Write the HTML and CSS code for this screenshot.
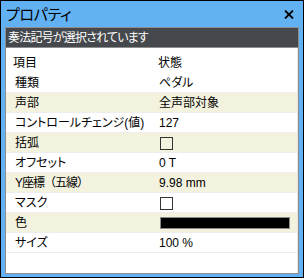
FILE: index.html
```html
<!DOCTYPE html>
<html lang="ja">
<head>
<meta charset="utf-8">
<link rel="stylesheet" href="styles.css">
</head>
<body>
<div class="window">
  <div class="titlebar">
    <span class="title">プロパティ</span>
    <svg class="close" width="10" height="9" viewBox="0 0 10 9"><path d="M1 0.5 L9 8.5 M9 0.5 L1 8.5" stroke="#000" stroke-width="1.8" fill="none"/></svg>
  </div>
  <div class="panel">
    <div class="status">奏法記号が選択されています</div>
    <div class="grid">
      <div class="row header"><span class="label">項目</span><span class="value">状態</span></div>
      <div class="row"><span class="label">種類</span><span class="value">ペダル</span></div>
      <div class="row alt"><span class="label">声部</span><span class="value">全声部対象</span></div>
      <div class="row"><span class="label">コントロールチェンジ(値)</span><span class="value">127</span></div>
      <div class="row alt"><span class="label">括弧</span><span class="value"><span class="check"></span></span></div>
      <div class="row"><span class="label">オフセット</span><span class="value">0 T</span></div>
      <div class="row alt"><span class="label wide">Y座標（五線）</span><span class="value">9.98 mm</span></div>
      <div class="row"><span class="label">マスク</span><span class="value"><span class="check"></span></span></div>
      <div class="row alt"><span class="label">色</span><span class="value"><span class="swatch"></span></span></div>
      <div class="row"><span class="label">サイズ</span><span class="value">100 %</span></div>
    </div>
  </div>
</div>
</body>
</html>
```

FILE: styles.css
```css
* { box-sizing: border-box; }
html, body { margin: 0; padding: 0; background: #fff; }
body {
  font-family: "Liberation Sans", "Noto Sans CJK JP", sans-serif;
  font-size: 12px;
  color: #000;
  font-feature-settings: "palt";
}
.window {
  width: 304px;
  height: 278px;
  border: 1px solid #000;
  background: #62b1f2;
  padding: 0 4px 3px 4px;
  display: flex;
  flex-direction: column;
}
.titlebar {
  height: 26px;
  display: flex;
  align-items: center;
  justify-content: space-between;
  padding: 0 5px 0 1px;
}
.title {
  font-family: "Noto Sans CJK JP", sans-serif;
  font-size: 15px;
  line-height: 20px;
  letter-spacing: -0.3px;
}
.close { display: block; margin-top: 1px; }
.panel {
  flex: 1;
  border: 1px solid #8e8e8e;
  background: #fff;
  display: flex;
  flex-direction: column;
}
.status {
  height: 20px;
  background: #45494d;
  border-bottom: 1px solid #8e8e8e;
  color: #fff;
  font-family: "Noto Sans CJK JP", sans-serif;
  font-size: 12px;
  line-height: 18px;
  letter-spacing: -0.8px;
  padding-left: 2px;
}
.grid {
  flex: 1;
  border-right: 1px solid #e4e4e4;
}
.row {
  display: grid;
  grid-template-columns: 153px 1fr;
  height: 20px;
  padding-top: 1px;
  align-items: center;
  border-bottom: 1px solid #ededed;
  line-height: 18px;
}
.row.alt { background: #f3f2df; }
.row.header {
  height: 25px;
  padding-top: 5px;
  border-bottom: none;
}
.label { padding-left: 9px; white-space: nowrap; }
.label.wide { font-feature-settings: normal; letter-spacing: -1px; }
.header .label { padding-left: 7px; }
.header .value { margin-left: -1px; }
.value { display: flex; align-items: center; white-space: nowrap; }
.check {
  width: 13px;
  height: 13px;
  border: 1px solid #333;
  margin-left: 1px;
}
.swatch {
  height: 12px;
  flex: 1;
  margin: 0 7px 0 1px;
  background: #000;
  border: 1px solid #8a8a8a;
}
```
